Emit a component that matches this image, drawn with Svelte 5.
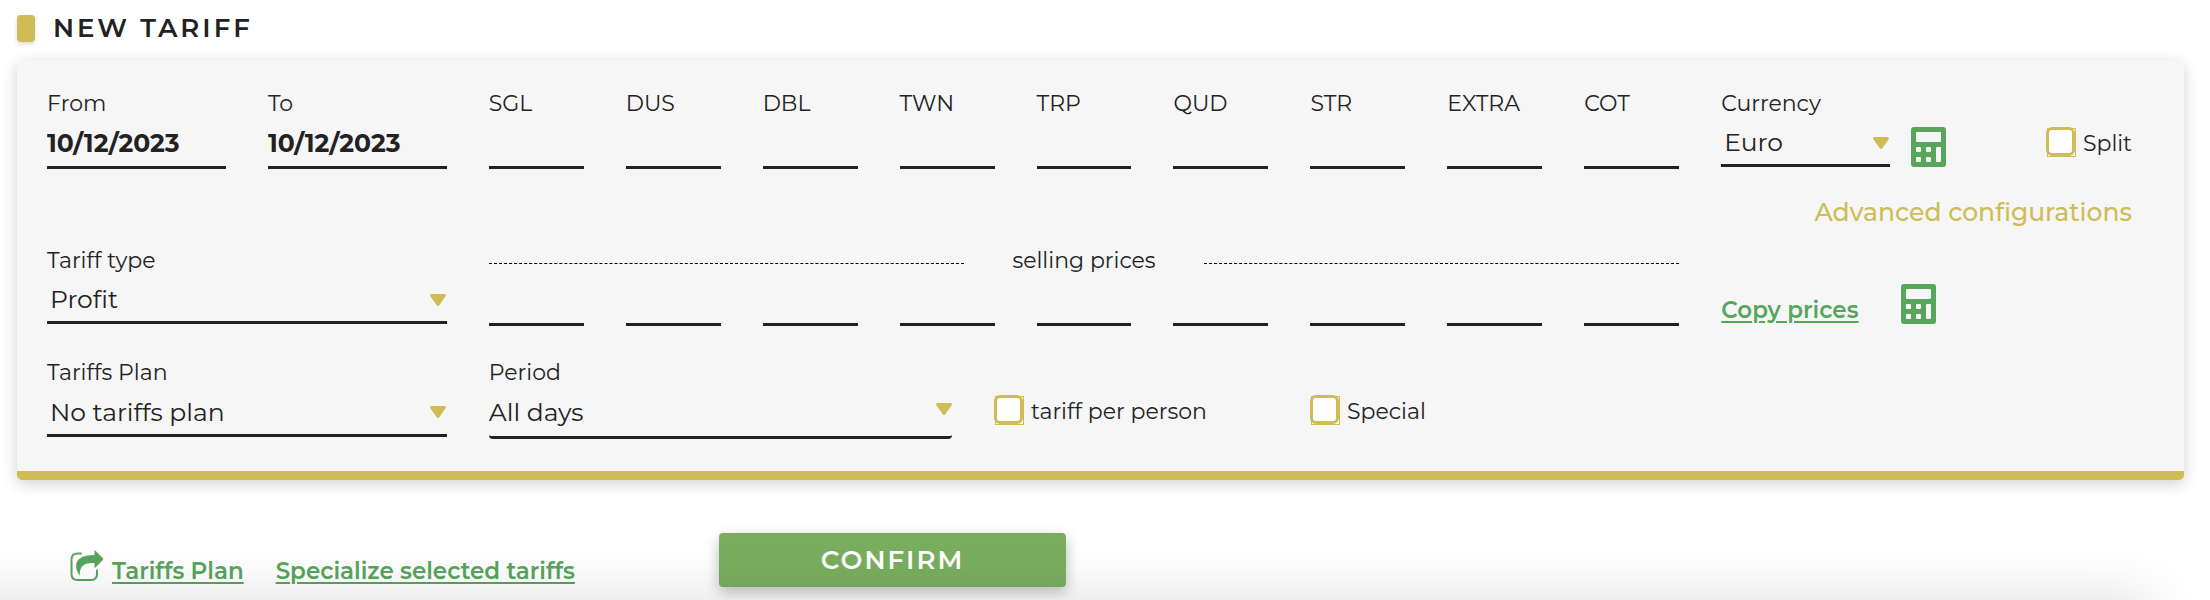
<script>
  const roomKeys = ['SGL', 'DUS', 'DBL', 'TWN', 'TRP', 'QUD', 'STR', 'EXTRA', 'COT'];
  let from = $state('10/12/2023');
  let to = $state('10/12/2023');
</script>

{#snippet calculator()}
  <svg class="calc" viewBox="0 0 35 40" aria-hidden="true">
    <path
      fill-rule="evenodd"
      d="M3 0h29a3 3 0 0 1 3 3v34a3 3 0 0 1-3 3H3a3 3 0 0 1-3-3V3a3 3 0 0 1 3-3ZM6 5a1 1 0 0 0-1 1v8a1 1 0 0 0 1 1h23a1 1 0 0 0 1-1V6a1 1 0 0 0-1-1ZM6 20a1 1 0 0 0-1 1v3a1 1 0 0 0 1 1h3a1 1 0 0 0 1-1v-3a1 1 0 0 0-1-1ZM16 20a1 1 0 0 0-1 1v3a1 1 0 0 0 1 1h3a1 1 0 0 0 1-1v-3a1 1 0 0 0-1-1ZM26 20a1 1 0 0 0-1 1v13a1 1 0 0 0 1 1h3a1 1 0 0 0 1-1V21a1 1 0 0 0-1-1ZM6 30a1 1 0 0 0-1 1v3a1 1 0 0 0 1 1h3a1 1 0 0 0 1-1v-3a1 1 0 0 0-1-1ZM16 30a1 1 0 0 0-1 1v3a1 1 0 0 0 1 1h3a1 1 0 0 0 1-1v-3a1 1 0 0 0-1-1Z"
    />
  </svg>
{/snippet}

{#snippet picker(id, label, value, cls)}
  <div class="field {cls}">
    <label for={id}>{label}</label>
    <div class="select">
      <select {id}><option>{value}</option></select>
      <svg viewBox="0 0 16 12" aria-hidden="true"><path d="M1.5 0h13Q16.600 .6 15.600 2.200L9.500 11Q8 13 6.500 11L.4 2.200Q-.6 .6 1.500 0Z" /></svg>
    </div>
  </div>
{/snippet}

{#snippet tick(id, label)}
  <div class="tick">
    <input type="checkbox" {id} />
    <label for={id}>{label}</label>
  </div>
{/snippet}

<main>
  <h1>NEW TARIFF</h1>

  <form class="card">
    <div class="grid first">
      <div class="field">
        <label for="from">From</label>
        <input class="date" id="from" bind:value={from} />
      </div>
      <div class="field">
        <label for="to">To</label>
        <input class="date" id="to" bind:value={to} />
      </div>
      {#each roomKeys as key}
        <div class="field">
          <label for="buy-{key}">{key}</label>
          <input id="buy-{key}" />
        </div>
      {/each}
      <div class="side">
        <div class="currency">
          {@render picker('currency', 'Currency', 'Euro', 'narrow')}
          <button class="icon" type="button" aria-label="Calculate">{@render calculator()}</button>
          {@render tick('split', 'Split')}
        </div>
        <a class="advanced" href="#advanced">Advanced configurations</a>
      </div>
    </div>

    <div class="grid second">
      {@render picker('type', 'Tariff type', 'Profit', 'wide')}
      <div class="selling">
        <div class="divider"><span>selling prices</span></div>
        <div class="prices">
          {#each roomKeys as key}
            <input aria-label={key} />
          {/each}
        </div>
      </div>
      <div class="copy">
        <a class="link" href="#copy">Copy prices</a>
        <button class="icon" type="button" aria-label="Calculate">{@render calculator()}</button>
      </div>
    </div>

    <div class="grid third">
      {@render picker('plan', 'Tariffs Plan', 'No tariffs plan', 'wide')}
      <div class="options">
        {@render picker('period', 'Period', 'All days', 'period')}
        {@render tick('person', 'tariff per person')}
        {@render tick('special', 'Special')}
      </div>
    </div>
  </form>

  <footer>
    <div class="links">
      <a class="link share" href="#plan">
        <svg viewBox="0 0 34 32" aria-hidden="true">
          <path d="M11 3.500H7.500Q1.500 3.500 1.500 9.500v14.500Q1.500 30 7.500 30h13.500q6 0 6-6V20.500" fill="none" stroke="currentColor" stroke-width="2" stroke-linecap="round" />
          <path d="M24.500 .5Q25 0 25.500 .7L33 8.500q.6.600 0 1.200L25.500 17.500q-.6.500-1 0V13C15 12.500 9.500 15 9.800 25.500 3 16 4.500 5 24.500 5Z" fill="currentColor" />
        </svg>
        <span>Tariffs Plan</span>
      </a>
      <a class="link" href="#specialize">Specialize selected tariffs</a>
    </div>
    <button class="confirm" type="button">CONFIRM</button>
  </footer>
</main>

<style>
  :global(body) {
    margin: 0;
    background: #fff;
  }

  main {
    position: relative;
    box-sizing: border-box;
    min-height: 100vh;
    padding: 12px 26px 0 17px;
    overflow: hidden;
    color: #222;
    font: 22px/28px Montserrat, Inter, sans-serif;
  }

  main::after {
    content: '';
    position: absolute;
    inset: 100% 60px auto -60px;
    height: 60px;
    box-shadow: 0 0 60px 4px rgba(0, 0, 0, 0.12);
    pointer-events: none;
  }

  h1 {
    display: flex;
    align-items: center;
    gap: 18px;
    margin: 0 0 16px;
    font-size: 26px;
    font-weight: 600;
    line-height: 32px;
    letter-spacing: 3px;
  }

  h1::before {
    content: '';
    width: 18px;
    height: 27px;
    border-radius: 4px;
    background: #cfbc57;
    box-shadow: 0 2px 4px rgba(0, 0, 0, 0.15);
  }

  .card {
    padding: 30px 52px 32px 30px;
    border-bottom: 9px solid #cfbc57;
    border-radius: 5px;
    background: #f6f6f6;
    box-shadow: 0 4px 16px rgba(0, 0, 0, 0.18);
  }

  .grid {
    display: grid;
    grid-template-columns: repeat(2, minmax(0, 179fr)) repeat(9, minmax(0, 95fr)) minmax(0, 411fr);
    column-gap: 42px;
    align-items: start;
  }

  .first {
    margin-bottom: 21px;
  }

  .second {
    margin-bottom: 33px;
  }

  .field {
    display: flex;
    flex-direction: column;
    min-width: 0;
  }

  .wide {
    grid-column: span 2;
  }

  input:not([type]),
  select {
    box-sizing: border-box;
    width: 100%;
    min-width: 0;
    margin: 0;
    padding: 0;
    border: 0;
    border-bottom: 3px solid #222;
    border-radius: 0;
    outline: 0;
    background: transparent;
    color: #222;
    font: inherit;
  }

  input:not([type]) {
    height: 51px;
  }

  input.date:not([type]) {
    padding-top: 2px;
    font-size: 25px;
    font-weight: 700;
  }

  .select {
    position: relative;
  }

  select {
    display: block;
    height: 49px;
    padding: 2px 0 0 3px;
    appearance: none;
    font-size: 25px;
  }

  .select svg {
    position: absolute;
    top: 19px;
    right: 1px;
    width: 16px;
    height: 12px;
    fill: #cfbc57;
    pointer-events: none;
  }

  .third select {
    height: 50px;
  }

  .third .period select {
    height: 52px;
    padding: 0;
    border-radius: 4px;
  }

  .period .select svg {
    top: 16px;
    right: 0;
  }

  .currency {
    display: flex;
    align-items: flex-end;
  }

  .narrow {
    width: 169px;
  }

  .icon {
    padding: 0;
    border: 0;
    background: none;
    cursor: pointer;
  }

  .calc {
    display: block;
    width: 35px;
    height: 40px;
    fill: #57a65c;
  }

  .currency .icon {
    margin-left: 21px;
  }

  .currency .tick {
    margin: 0 0 8px auto;
  }

  .tick {
    display: flex;
    align-items: center;
    gap: 7px;
  }

  .tick input {
    position: relative;
    box-sizing: border-box;
    flex: none;
    width: 29px;
    height: 29px;
    margin: 0 0 2px 1px;
    appearance: none;
    border: 1px solid #cfbc57;
    background: #fff;
  }

  .tick input::before {
    content: '';
    position: absolute;
    inset: -2px 0 0 -2px;
    border: 3px solid #cfbc57;
    border-radius: 6px;
  }

  .advanced {
    display: block;
    margin-top: 31px;
    color: #cfbc57;
    font-size: 25px;
    font-weight: 500;
    text-align: right;
    text-decoration: none;
    white-space: nowrap;
  }

  .selling {
    grid-column: span 9;
  }

  .divider {
    display: flex;
    align-items: center;
    gap: 48px;
  }

  .divider::before,
  .divider::after {
    content: '';
    flex: 1;
    margin-top: 4px;
    border-top: 1px dashed #000;
  }

  .prices {
    display: grid;
    grid-template-columns: repeat(9, minmax(0, 1fr));
    gap: 42px;
  }

  .copy {
    display: flex;
    align-items: flex-end;
    gap: 42px;
    padding-top: 37px;
  }

  .link {
    color: #57a65c;
    font-size: 23px;
    font-weight: 600;
    text-decoration-line: underline;
    text-decoration-thickness: 2px;
    text-underline-offset: 3px;
    white-space: nowrap;
  }

  .options {
    grid-column: span 9;
    display: grid;
    grid-template-columns: minmax(0, 463fr) minmax(0, 274fr) minmax(0, 369fr);
    column-gap: 42px;
    align-items: end;
  }

  .options .tick {
    margin-bottom: 12px;
  }

  footer {
    display: flex;
    align-items: flex-start;
    padding: 53px 0 0 53px;
  }

  .links {
    display: flex;
    align-items: flex-end;
    gap: 32px;
    width: 649px;
    padding-top: 17px;
  }

  .share {
    display: flex;
    align-items: flex-end;
    gap: 8px;
    text-decoration: none;
  }

  .share span {
    text-decoration: underline 2px;
    text-underline-offset: 3px;
  }

  .share svg {
    width: 34px;
    height: 32px;
    margin-bottom: 3px;
  }

  .confirm {
    width: 347px;
    height: 54px;
    padding: 0;
    border: 0;
    border-radius: 4px;
    background: #79ae5f;
    box-shadow: 0 5px 14px rgba(0, 0, 0, 0.25);
    color: #fff;
    font: 600 26px/28px Montserrat, Inter, sans-serif;
    letter-spacing: 2px;
  }
</style>
